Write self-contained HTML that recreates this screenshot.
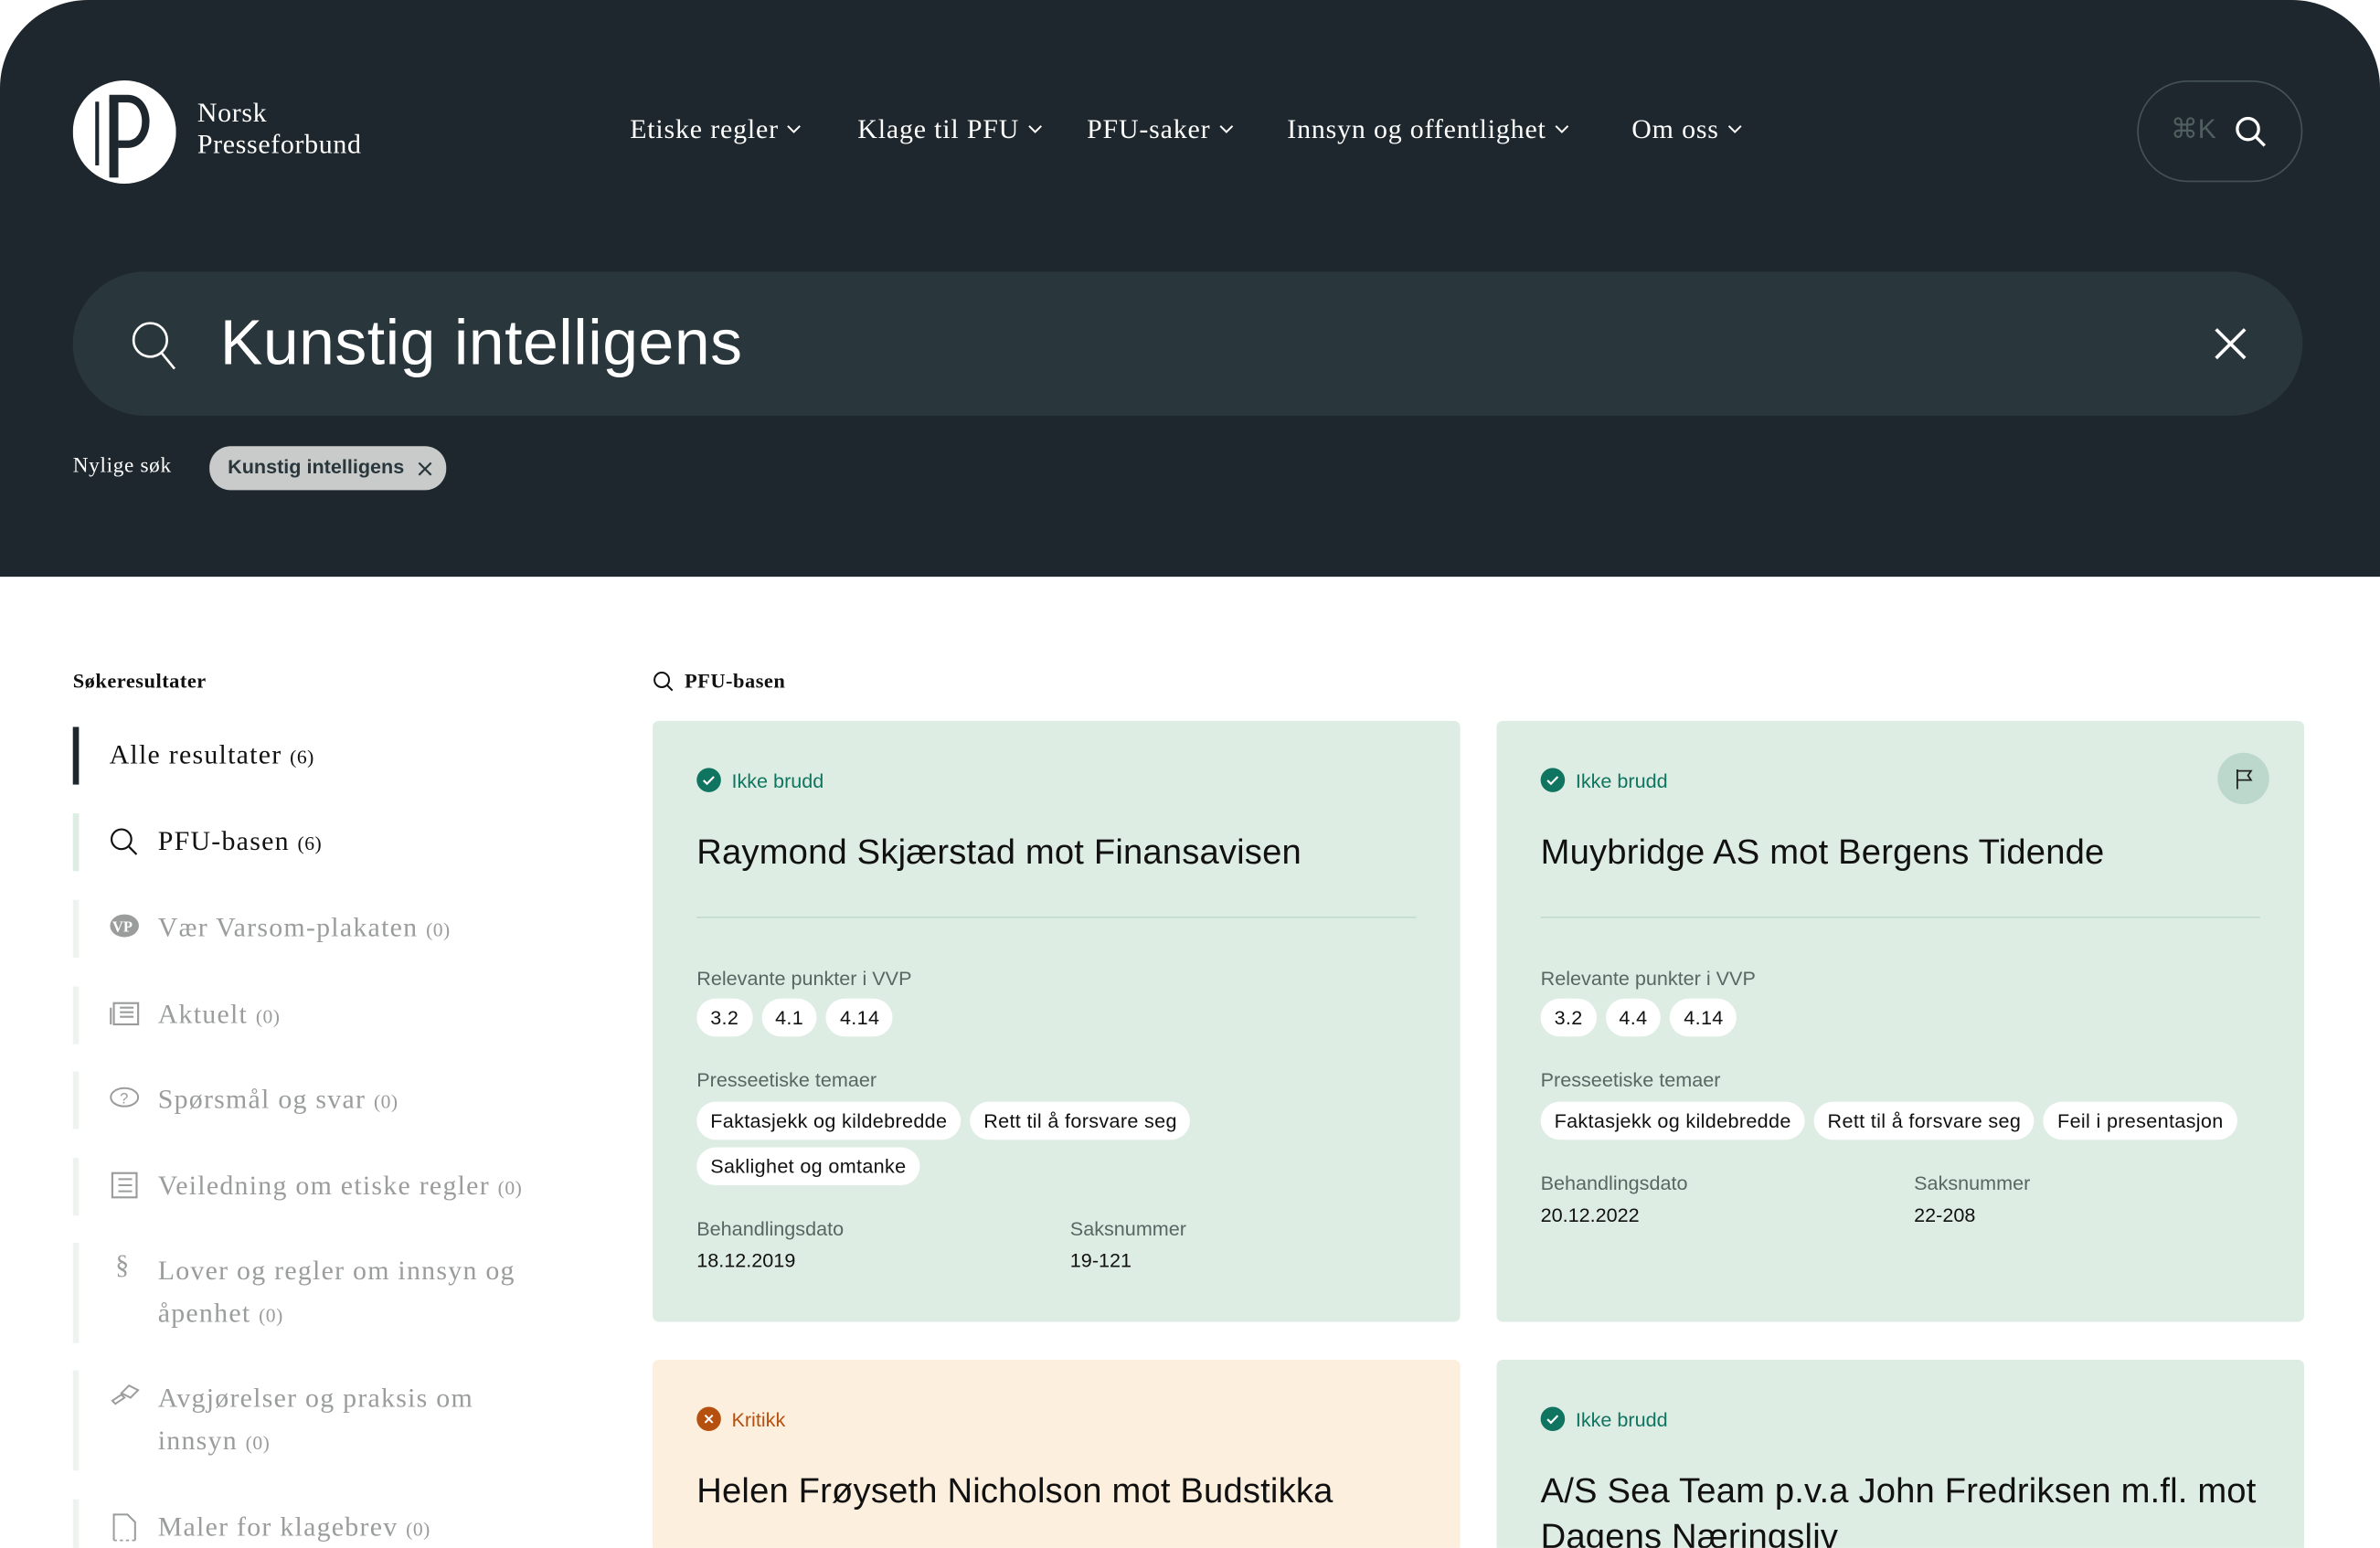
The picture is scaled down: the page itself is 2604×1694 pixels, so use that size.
<!DOCTYPE html>
<html><head><meta charset="utf-8"><style>
*{margin:0;padding:0;box-sizing:border-box}
html,body{width:2604px;height:1694px;overflow:hidden;background:#fff}
#w{position:absolute;left:0;top:0;width:1568px;height:1020px;transform:scale(1.660714);transform-origin:0 0;font-family:"Liberation Sans",sans-serif;overflow:hidden}
.a{position:absolute;white-space:nowrap}
.serif{font-family:"Liberation Serif",serif}
#hd{position:absolute;left:0;top:0;width:1568px;height:380px;background:#1e272d;border-radius:58px 58px 0 0}
.nav{top:75px;font-size:18px;color:#fff;letter-spacing:0.5px}
.nav svg{margin-left:5px;vertical-align:3px}
.card{position:absolute;width:532px;background:#deede3;border-radius:4px}
.st{position:absolute;left:29px;top:31px;font-size:13px;color:#0f7460;display:flex;align-items:center}
.st i{display:inline-block;width:16px;height:16px;border-radius:50%;background:#0f7460;margin-right:7px;position:relative}
.ti{position:absolute;left:29px;top:71px;font-size:23px;color:#111;line-height:30px;width:490px;white-space:normal;letter-spacing:0.1px}
.hr{position:absolute;left:29px;right:29px;top:129px;height:1px;background:#c2dbcf}
.lb{position:absolute;left:29px;font-size:13px;color:#5a6663}
.chips{position:absolute;left:29px;display:flex;flex-wrap:wrap;gap:6px;width:480px}
.chips span{background:#fff;border-radius:13px;height:25px;line-height:25px;padding:0 9px;font-size:13px;color:#111;letter-spacing:0.2px}
.vl{position:absolute;font-size:13px;color:#111}
.si{position:absolute;left:48px;width:4px;background:#eef3f0}
.sl{position:absolute;left:104px;font-family:"Liberation Serif",serif;font-size:18px;color:#9a9d9c;line-height:28px;letter-spacing:0.75px}
.sl small{font-size:13px;letter-spacing:0.3px}
.ic{position:absolute;left:72px}
</style></head><body><div id="w">
<div id="hd"></div>
<svg class="a" style="left:48px;top:53px" width="68" height="68" viewBox="0 0 68 68"><circle cx="34" cy="34" r="34" fill="#fff"/><path d="M16 14 L16 56" stroke="#1e272d" stroke-width="2.5"/><path d="M24 12 H36 C52 12 52 42 36 42 H30" fill="none" stroke="#1e272d" stroke-width="5"/><rect x="24" y="12" width="6" height="52" fill="#1e272d"/></svg>
<div class="a serif" style="left:130px;top:64px;font-size:18px;color:#fff;line-height:21px;letter-spacing:0.4px">Norsk<br>Presseforbund</div>
<div class="a serif nav" style="left:415px">Etiske regler<svg width="10" height="6"><path d="M1 1l4 4 4-4" stroke="#fff" fill="none" stroke-width="1.2"/></svg></div>
<div class="a serif nav" style="left:565px">Klage til PFU<svg width="10" height="6"><path d="M1 1l4 4 4-4" stroke="#fff" fill="none" stroke-width="1.2"/></svg></div>
<div class="a serif nav" style="left:716px">PFU-saker<svg width="10" height="6"><path d="M1 1l4 4 4-4" stroke="#fff" fill="none" stroke-width="1.2"/></svg></div>
<div class="a serif nav" style="left:848px">Innsyn og offentlighet<svg width="10" height="6"><path d="M1 1l4 4 4-4" stroke="#fff" fill="none" stroke-width="1.2"/></svg></div>
<div class="a serif nav" style="left:1075px">Om oss<svg width="10" height="6"><path d="M1 1l4 4 4-4" stroke="#fff" fill="none" stroke-width="1.2"/></svg></div>
<div class="a" style="left:1408px;top:53px;width:109px;height:67px;border:1px solid #445257;border-radius:34px"></div>
<div class="a" style="left:1430px;top:75px;font-size:18px;color:#4f5e5e">⌘K</div>
<svg class="a" style="left:1472px;top:76px" width="22" height="22"><circle cx="9" cy="9" r="7" stroke="#fff" stroke-width="2" fill="none"/><path d="M14 14l6 6" stroke="#fff" stroke-width="2"/></svg>
<div class="a" style="left:48px;top:179px;width:1469px;height:95px;background:#29363c;border-radius:48px"></div>
<svg class="a" style="left:85px;top:210px" width="32" height="34"><circle cx="14" cy="14" r="11" stroke="#fff" stroke-width="1.6" fill="none"/><path d="M21 22l9 11" stroke="#fff" stroke-width="1.6"/></svg>
<div class="a" style="left:145px;top:202px;font-size:42px;color:#fff;letter-spacing:0.3px">Kunstig intelligens</div>
<svg class="a" style="left:1459px;top:216px" width="21" height="21"><path d="M1 1l19 19M20 1L1 20" stroke="#fff" stroke-width="2.2"/></svg>
<div class="a serif" style="left:48px;top:300px;font-size:14px;color:#fff;letter-spacing:0.4px">Nylige søk</div>
<div class="a" style="left:138px;top:294px;width:156px;height:29px;background:#c8cbca;border-radius:14px"></div>
<div class="a" style="left:150px;top:300px;font-size:13px;font-weight:bold;color:#29363c">Kunstig intelligens</div>
<svg class="a" style="left:275px;top:304px" width="10" height="10"><path d="M1 1l8 8M9 1L1 9" stroke="#29363c" stroke-width="1.3"/></svg>
<div class="a serif" style="left:48px;top:441px;font-size:13.5px;color:#111;font-weight:bold;letter-spacing:0.3px">Søkeresultater</div>
<div class="si" style="top:479px;height:38px;background:#1e272d"></div>
<div class="sl a" style="left:72px;top:483px;color:#111">Alle resultater <small>(6)</small></div>
<div class="si" style="top:536px;height:38px;background:#deede3"></div>
<svg class="ic" style="top:545px" width="20" height="20"><circle cx="8" cy="8" r="6.5" stroke="#111" stroke-width="1.3" fill="none"/><path d="M13 13l5 5" stroke="#111" stroke-width="1.3"/></svg>
<div class="sl a" style="top:540px;color:#111">PFU-basen <small>(6)</small></div>
<div class="si" style="top:593px;height:38px"></div>
<svg class="ic" style="top:602px" width="20" height="16"><ellipse cx="10" cy="8" rx="9.5" ry="7.5" fill="#9a9d9c"/><text x="2" y="12" font-size="10" font-weight="bold" fill="#fff" font-family="Liberation Serif">VP</text></svg>
<div class="sl a" style="top:597px">Vær Varsom-plakaten <small>(0)</small></div>
<div class="si" style="top:650px;height:38px"></div>
<svg class="ic" style="top:660px" width="20" height="16"><rect x="3" y="1" width="16" height="14" stroke="#9a9d9c" fill="none" stroke-width="1.3"/><path d="M1 4v11M7 4h9M7 7h9M7 10h9" stroke="#9a9d9c" stroke-width="1.3"/></svg>
<div class="sl a" style="top:654px">Aktuelt <small>(0)</small></div>
<div class="si" style="top:706px;height:38px"></div>
<svg class="ic" style="top:716px" width="20" height="16"><ellipse cx="10" cy="7" rx="9" ry="6" stroke="#9a9d9c" fill="none" stroke-width="1.2"/><text x="7" y="11" font-size="10" fill="#9a9d9c">?</text></svg>
<div class="sl a" style="top:710px">Spørsmål og svar <small>(0)</small></div>
<div class="si" style="top:763px;height:38px"></div>
<svg class="ic" style="top:772px" width="20" height="18"><rect x="2" y="1" width="16" height="16" stroke="#9a9d9c" fill="none" stroke-width="1.3"/><path d="M6 5h9M6 9h9M6 13h9" stroke="#9a9d9c" stroke-width="1.2"/></svg>
<div class="sl a" style="top:767px">Veiledning om etiske regler <small>(0)</small></div>
<div class="si" style="top:819px;height:66px"></div>
<div class="ic a serif" style="left:76px;top:823px;font-size:18px;color:#9a9d9c">§</div>
<div class="sl a" style="top:823px">Lover og regler om innsyn og<br>åpenhet <small>(0)</small></div>
<div class="si" style="top:903px;height:66px"></div>
<svg class="ic" style="top:911px" width="20" height="16"><path d="M2 12l6-4 2 2-6 4zM8 7l5-5 6 3-5 5z" stroke="#9a9d9c" fill="none" stroke-width="1.2"/></svg>
<div class="sl a" style="top:907px">Avgjørelser og praksis om<br>innsyn <small>(0)</small></div>
<div class="si" style="top:988px;height:32px"></div>
<svg class="ic" style="top:996px" width="20" height="20"><path d="M3 19V2h9l5 5v12" stroke="#9a9d9c" fill="none" stroke-width="1.2"/><path d="M3 19h14" stroke="#9a9d9c" stroke-dasharray="2 2"/></svg>
<div class="sl a" style="top:992px">Maler for klagebrev <small>(0)</small></div>
<svg class="a" style="left:430px;top:442px" width="14" height="14"><circle cx="6" cy="6" r="4.8" stroke="#111" stroke-width="1.2" fill="none"/><path d="M9.5 9.5l3.5 3.5" stroke="#111" stroke-width="1.2"/></svg>
<div class="a serif" style="left:451px;top:441px;font-size:13.5px;color:#111;font-weight:bold;letter-spacing:0.3px">PFU-basen</div>

<div class="card" style="left:430px;top:475px;height:396px">
<div class="st"><i><svg width="16" height="16" style="position:absolute"><path d="M4.5 8.2l2.3 2.3 4.5-4.7" stroke="#fff" fill="none" stroke-width="1.3"/></svg></i>Ikke brudd</div>
<div class="ti">Raymond Skjærstad mot Finansavisen</div>
<div class="hr"></div>
<div class="lb" style="top:162px">Relevante punkter i VVP</div>
<div class="chips" style="top:183px"><span>3.2</span><span>4.1</span><span>4.14</span></div>
<div class="lb" style="top:229px">Presseetiske temaer</div>
<div class="chips" style="top:251px;width:400px;row-gap:5px"><span>Faktasjekk og kildebredde</span><span>Rett til å forsvare seg</span><span>Saklighet og omtanke</span></div>
<div class="lb" style="top:327px">Behandlingsdato</div><div class="vl" style="left:29px;top:348px">18.12.2019</div>
<div class="lb" style="left:275px;top:327px">Saksnummer</div><div class="vl" style="left:275px;top:348px">19-121</div>
</div>

<div class="card" style="left:986px;top:475px;height:396px">
<div class="st"><i><svg width="16" height="16" style="position:absolute"><path d="M4.5 8.2l2.3 2.3 4.5-4.7" stroke="#fff" fill="none" stroke-width="1.3"/></svg></i>Ikke brudd</div>
<div class="a" style="left:475px;top:21px;width:34px;height:34px;border-radius:50%;background:#bcd8cc"></div>
<svg class="a" style="left:486px;top:31px" width="14" height="14"><path d="M2 1v13M2 2h9l-2 3 2 3H2" stroke="#222" fill="none" stroke-width="1.1"/></svg>
<div class="ti">Muybridge AS mot Bergens Tidende</div>
<div class="hr"></div>
<div class="lb" style="top:162px">Relevante punkter i VVP</div>
<div class="chips" style="top:183px"><span>3.2</span><span>4.4</span><span>4.14</span></div>
<div class="lb" style="top:229px">Presseetiske temaer</div>
<div class="chips" style="top:251px;width:490px"><span>Faktasjekk og kildebredde</span><span>Rett til å forsvare seg</span><span>Feil i presentasjon</span></div>
<div class="lb" style="top:297px">Behandlingsdato</div><div class="vl" style="left:29px;top:318px">20.12.2022</div>
<div class="lb" style="left:275px;top:297px">Saksnummer</div><div class="vl" style="left:275px;top:318px">22-208</div>
</div>

<div class="card" style="left:430px;top:896px;height:140px;background:#fcefde">
<div class="st" style="color:#b5500f"><i style="background:#b5500f"><svg width="16" height="16" style="position:absolute"><path d="M5.5 5.5l5 5M10.5 5.5l-5 5" stroke="#fff" stroke-width="1.2"/></svg></i>Kritikk</div>
<div class="ti">Helen Frøyseth Nicholson mot Budstikka</div>
</div>
<div class="card" style="left:986px;top:896px;height:140px">
<div class="st"><i><svg width="16" height="16" style="position:absolute"><path d="M4.5 8.2l2.3 2.3 4.5-4.7" stroke="#fff" fill="none" stroke-width="1.3"/></svg></i>Ikke brudd</div>
<div class="ti">A/S Sea Team p.v.a John Fredriksen m.fl. mot Dagens Næringsliv</div>
</div>
</div></body></html>
